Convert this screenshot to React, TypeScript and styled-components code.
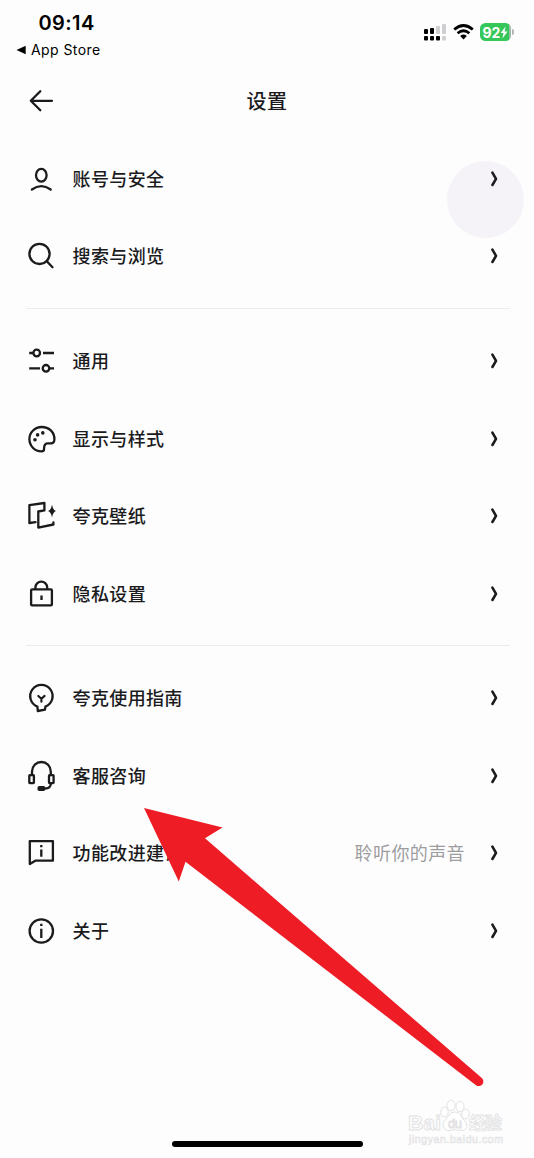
import React from 'react';
import styled, { createGlobalStyle } from 'styled-components';

const GlobalStyle = createGlobalStyle`
  * { box-sizing: border-box; }
  body { margin: 0; background: #fdfdfe; }
`;

const Screen = styled.main`
  position: relative;
  display: flex;
  flex-direction: column;
  width: 534px;
  height: 1158px;
  overflow: hidden;
  background: #fdfdfe;
  color: #1b1b1d;
  font-family: Inter, 'Noto Sans CJK SC', sans-serif;
`;

const StatusBar = styled.header`
  display: flex;
  justify-content: space-between;
  height: 66px;
  padding: 10px 20px 0 16px;
  color: #000;
`;

const StatusLeft = styled.div`
  display: flex;
  flex-direction: column;
`;

const Clock = styled.time`
  margin-left: 22.5px;
  font-size: 20px;
  font-weight: 600;
  line-height: 26px;
  letter-spacing: 0.4px;
`;

const BackToApp = styled.div`
  display: flex;
  align-items: center;
  gap: 5px;
  margin-top: 4.5px;
  font-size: 14px;
  line-height: 18px;
  letter-spacing: 0.42px;
`;

const StatusRight = styled.div`
  display: flex;
  align-items: center;
  height: 24px;
  margin-top: 10px;
`;

const Battery = styled.div`
  display: flex;
  align-items: center;
  justify-content: center;
  width: 31px;
  height: 18px;
  margin-left: 6px;
  border-radius: 5.5px;
  background: linear-gradient(90deg, #35c759 92%, #9bb8a2 92%);
  color: #fff;
  font-size: 14px;
  font-weight: 700;
`;

const BatteryCap = styled.i`
  width: 2px;
  height: 6px;
  margin-left: 1px;
  border-radius: 0 2px 2px 0;
  background: #b5b5b8;
`;

const TitleBar = styled.div`
  display: grid;
  grid-template-columns: 30px 1fr 30px;
  align-items: center;
  height: 70px;
  padding: 0 26px;
`;

const Title = styled.h1`
  margin: 0;
  padding: 0 0 1.4px;
  text-align: center;
  font-size: 20px;
  font-weight: 500;
  letter-spacing: 0.4px;
`;

const List = styled.div`
  display: flex;
  flex-direction: column;
  padding: 4px 24px 0 26px;
`;

const Divider = styled.hr`
  width: 100%;
  height: 1px;
  margin: 13px 0 13.25px;
  border: 0;
  background: #ececee;
`;

const Row = styled.div`
  display: flex;
  align-items: center;
  height: 77.5px;
  padding-right: 12px;
`;

const Icon = styled.svg`
  flex: none;
  overflow: visible;
  fill: none;
  stroke: #1b1b1d;
  stroke-width: 2.3;
  stroke-linecap: round;
  stroke-linejoin: round;
`;

const Label = styled.span`
  flex: 1;
  margin-left: 16.6px;
  padding-bottom: 2px;
  font-size: 18px;
  font-weight: 500;
  letter-spacing: 0.35px;
`;

const Hint = styled.span`
  margin-right: 25px;
  padding-bottom: 2px;
  color: #9d9d9f;
  font-size: 18px;
  letter-spacing: 0.4px;
`;

const TouchSpot = styled.div`
  position: absolute;
  top: 160.5px;
  left: 446.5px;
  width: 77px;
  height: 77px;
  border-radius: 50%;
  background: rgba(90, 60, 110, 0.05);
`;

const PointerArrow = styled.svg`
  position: absolute;
  top: 800px;
  left: 136px;
`;

const Watermark = styled.svg`
  position: absolute;
  top: 1094px;
  left: 404px;
  fill: #fff;
  stroke: #e2e2e3;
  stroke-width: 1;
  font-family: 'Liberation Sans', 'Noto Sans CJK SC', sans-serif;
`;

const HomeIndicator = styled.div`
  position: absolute;
  bottom: 11px;
  left: 172px;
  width: 191px;
  height: 6px;
  border-radius: 3px;
  background: #000;
`;

const icons = {
  account: (
    <>
      <ellipse cx="15.3" cy="11.3" rx="5.3" ry="6.4" />
      <path d="M5.9 25.5Q15.3 18.8 24.7 25.5" />
    </>
  ),
  search: (
    <>
      <circle cx="13.5" cy="12.9" r="10.1" />
      <path d="M20.8 20.2 26.5 26.2" />
    </>
  ),
  general: (
    <>
      <circle cx="10.7" cy="7" r="3.3" />
      <path strokeLinecap="butt" d="M3.2 7H7.5M17 7H28M3.2 22.3H14M23.5 22.3H28" />
      <circle cx="20" cy="22.3" r="3.3" />
    </>
  ),
  display: (
    <>
      <path d="M28.4 15.5C28.6 8 22.8 3 15.7 3 9 3 3.4 8.4 3.4 15.1 3.4 21.8 8.5 27.3 15.5 27.3 17.3 27.3 18 26.6 18 25.2 18 21.5 18.8 19.4 21.5 19.4H24.8C27.2 19.4 28.3 18 28.4 15.5Z" />
      <g fill="#1b1b1d" stroke="none">
        <circle cx="9" cy="15.8" r="1.8" />
        <circle cx="11.6" cy="10.9" r="1.8" />
        <circle cx="16.8" cy="8.9" r="1.8" />
      </g>
    </>
  ),
  wallpaper: (
    <>
      <path d="M9.5 21.2 3.4 22V4.2L18.4 2V9.4L12.3 10.5V26.6L27.4 23.5V21.5" />
      <path fill="#1b1b1d" stroke="none" d="M26 3.8Q26.9 8.9 30 10.1 26.9 11.3 26 16.5 25.1 11.3 22 10.1 25.1 8.9 26 3.8Z" />
    </>
  ),
  privacy: (
    <>
      <rect x="5.1" y="10.3" width="20.8" height="16.1" rx="1" />
      <path strokeLinecap="butt" d="M9.4 10V8.5A5.9 5.9 0 0 1 21.2 8.5V10M15.5 16.5V21" />
    </>
  ),
  guide: (
    <>
      <path d="M11.4 23.6A11.2 11.2 0 1 1 19.4 23.6L19 26.6 11.8 28Z" />
      <path d="M12.3 12.9 15.4 15.8 18.6 12.9M15.4 15.8V18.8" strokeWidth="2.1" />
    </>
  ),
  service: (
    <>
      <path d="M6 14V10.4A9.4 9.4 0 0 1 24.8 10.4V14M24.8 23Q24.5 27.5 19 27.5" />
      <rect x="3.3" y="14.2" width="4.6" height="8" rx="0.6" />
      <rect x="23" y="14.2" width="4.6" height="8" rx="0.6" />
      <rect x="11.5" y="24.9" width="7.8" height="5.2" rx="1.8" fill="#1b1b1d" stroke="none" />
    </>
  ),
  feedback: (
    <>
      <path d="M3.8 26V3.1H26.9V22.7H9.3Z" />
      <path strokeLinecap="butt" d="M15.3 7V9.2M15.3 11.5V18.7" />
    </>
  ),
  about: (
    <>
      <circle cx="15.3" cy="15" r="11.7" />
      <path strokeLinecap="butt" d="M15.3 7.8V10.1M15.3 12.7V22" />
    </>
  ),
};

type Item = { icon: keyof typeof icons; label: string; hint?: string };

const groups: Item[][] = [
  [
    { icon: 'account', label: '账号与安全' },
    { icon: 'search', label: '搜索与浏览' },
  ],
  [
    { icon: 'general', label: '通用' },
    { icon: 'display', label: '显示与样式' },
    { icon: 'wallpaper', label: '夸克壁纸' },
    { icon: 'privacy', label: '隐私设置' },
  ],
  [
    { icon: 'guide', label: '夸克使用指南' },
    { icon: 'service', label: '客服咨询' },
    { icon: 'feedback', label: '功能改进建议', hint: '聆听你的声音' },
    { icon: 'about', label: '关于' },
  ],
];

function SettingRow({ icon, label, hint }: Item) {
  return (
    <Row>
      <Icon width="30" height="30" viewBox="0 0 30 30">{icons[icon]}</Icon>
      <Label>{label}</Label>
      {hint && <Hint>{hint}</Hint>}
      <Icon width="8" height="16" viewBox="0 0 8 16">
        <path d="M2.4 1.6Q4.2 4.6 6 7.8 4.2 11 2.4 14" strokeWidth="2.6" />
      </Icon>
    </Row>
  );
}

export default function App() {
  return (
    <Screen>
      <GlobalStyle />
      <StatusBar>
        <StatusLeft>
          <Clock>09:14</Clock>
          <BackToApp>
            <svg width="10" height="10" viewBox="0 0 10 10"><path d="M0.5 5 9.7 0.8V9.2Z" /></svg>
            App Store
          </BackToApp>
        </StatusLeft>
        <StatusRight>
          <svg width="22" height="18" viewBox="0 0 22 18">
            <g fill="#000">
              <rect x="0" y="6" width="4" height="5" rx="1" />
              <rect x="6" y="5" width="4" height="6" rx="1" />
              <rect x="0" y="13" width="4" height="4.5" rx="1" />
              <rect x="6" y="13" width="4" height="4.5" rx="1" />
              <rect x="12" y="13" width="4" height="4.5" rx="1" />
            </g>
            <g fill="#cfcfd2">
              <rect x="12" y="3" width="4" height="8" rx="1" />
              <rect x="18" y="1" width="4" height="10" rx="1" />
              <rect x="18" y="13" width="4" height="4.5" rx="1" />
            </g>
          </svg>
          <svg width="21" height="16" viewBox="0 0 21 16" style={{ marginLeft: 7 }}>
            <g fill="none" stroke="#000" strokeWidth="2.7">
              <path d="M1.2 5.6Q10.5-2.6 19.8 5.6" />
              <path d="M4.6 9.3Q10.5 4.2 16.4 9.3" />
            </g>
            <path d="M7.2 11.9Q10.5 9.2 13.8 11.9L10.5 15.4Z" />
          </svg>
          <Battery>
            92
            <svg width="8" height="13" viewBox="0 0 8 13"><path fill="#fff" d="M5.6 0.5 0.6 7H3.5L2.4 12.5 7.6 5.6H4.6Z" /></svg>
          </Battery>
          <BatteryCap />
        </StatusRight>
      </StatusBar>
      <TitleBar>
        <Icon width="30" height="30" viewBox="0 0 30 30">
          <path d="M26 14.8H5M14.3 5.2 4.8 14.8 14.3 24.3" />
        </Icon>
        <Title>设置</Title>
      </TitleBar>
      <List>
        {groups.map((items, index) => (
          <React.Fragment key={index}>
            {index > 0 && <Divider />}
            {items.map((item) => <SettingRow key={item.icon} {...item} />)}
          </React.Fragment>
        ))}
      </List>
      <TouchSpot />
      <PointerArrow width="360" height="296" viewBox="136 800 360 296">
        <path fill="#ee1c25" d="M144 808 222.5 827.5 205 838.3 481.5 1077.8A4.6 4.6 0 0 1 476 1085.2L185.5 861.8 178.8 881.5Z" />
      </PointerArrow>
      <Watermark width="110" height="58" viewBox="404 1094 110 58">
        <text x="408" y="1129.5" fontSize="21" fontWeight="700" textLength="33">Bai</text>
        <ellipse cx="444.5" cy="1112" rx="3.7" ry="5" />
        <ellipse cx="451" cy="1105.5" rx="4" ry="5.2" />
        <ellipse cx="460" cy="1106.5" rx="4" ry="5.2" />
        <ellipse cx="465.5" cy="1114" rx="3.7" ry="5" />
        <path d="M455 1112C449 1112 449 1117 445 1120 441 1125 444 1131 449 1130.5Q455 1129 461 1130.5C467 1131 469 1125 464 1120 461 1117 461 1112 455 1112Z" />
        <text x="448" y="1128" fontSize="13" textLength="14">du</text>
        <text x="469" y="1128.5" fontSize="17" fontWeight="700" strokeWidth="0.8" textLength="33">经验</text>
        <text x="409" y="1142.5" fontSize="10.5" strokeWidth="0.6" textLength="94">jingyan.baidu.com</text>
      </Watermark>
      <HomeIndicator />
    </Screen>
  );
}
